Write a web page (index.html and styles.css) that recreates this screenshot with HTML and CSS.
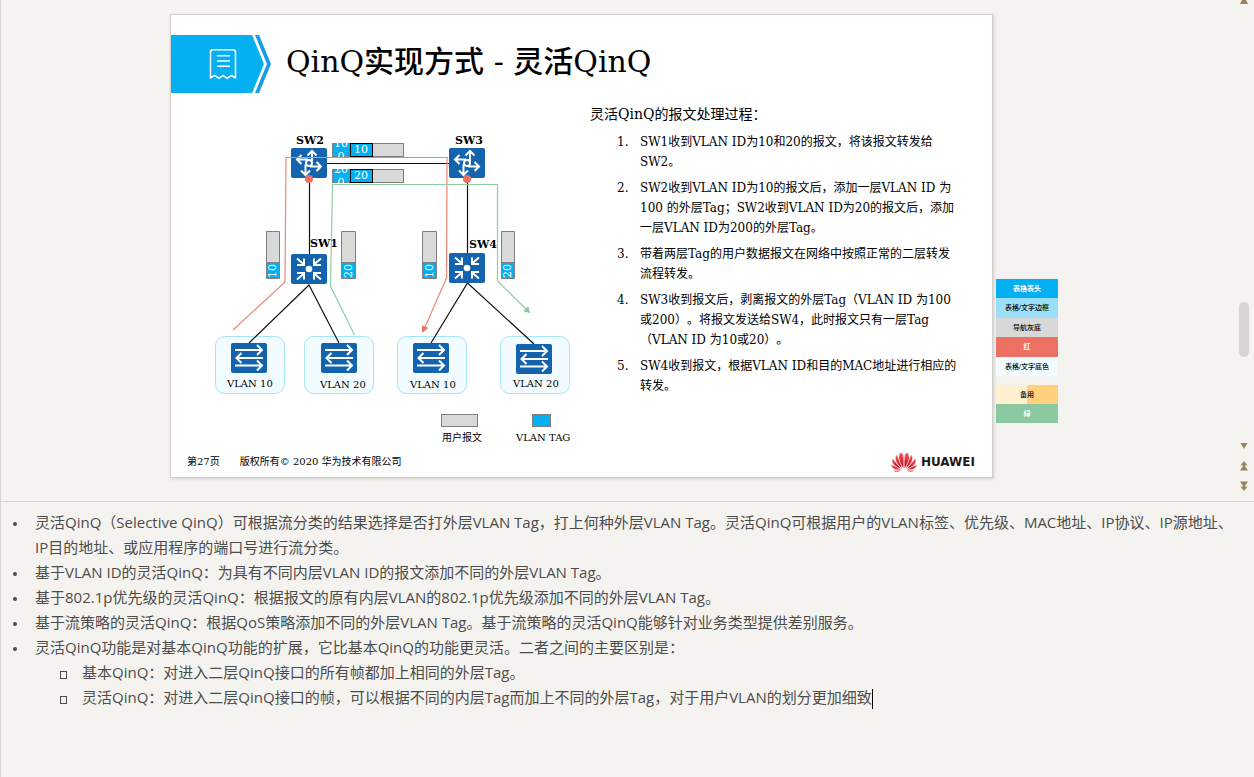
FILE: index.html
```html
<!DOCTYPE html>
<html lang="zh-CN">
<head>
<meta charset="utf-8">
<title>QinQ实现方式 - 灵活QinQ</title>
<link rel="stylesheet" href="styles.css">
</head>
<body>
<div class="editor">
  <main class="stage">
    <article class="slide">
      <header class="slide-header">
        <svg class="badge" width="101" height="58" viewBox="0 0 101 58" aria-hidden="true">
          <path d="M0 0H81L93 29L81 58H0Z" fill="#04aff2"/>
          <path d="M84 0H88L100 29L88 58H84L96 29Z" fill="#189ce8"/>
          <path d="M42 14.700h20q2.500 0 2.500 2.500V43l-4.200-2.600-4.200 3-4.100-3-4.100 3-4.200-3-4.200 2.600V17.200q0-2.500 2.500-2.500Z" fill="none" stroke="#fff" stroke-width="1.500" stroke-linejoin="round"/>
          <path d="M46 20.700h13M46 26h13M46 31.300h13" stroke="#fff" stroke-width="1.600"/>
        </svg>
        <h1>QinQ实现方式 - 灵活QinQ</h1>
      </header>
      <div class="slide-body">
        <svg class="diagram" width="380" height="325" viewBox="205 125 380 325" role="img" aria-label="灵活QinQ组网">
          <defs>
            <g id="router">
              <rect width="36" height="30" rx="2" fill="#1463ae"/>
              <g fill="none" stroke="#fff" stroke-width="2">
                <path d="M21 13V3.500M16.500 7.500L21 3L25.500 7.500"/>
                <path d="M17 11.500H6M10.500 7L6 11.500L10.500 16"/>
                <path d="M14.500 16.500V26.500M10 22.500L14.500 27L19 22.500"/>
                <path d="M19 18.500H30M25.500 14L30 18.500L25.500 23"/>
                <circle cx="18" cy="15" r="3"/>
              </g>
            </g>
            <g id="aggregate">
              <rect width="36" height="30" rx="2" fill="#1463ae"/>
              <circle cx="18" cy="15" r="3.300" fill="#fff"/>
              <path d="M6 4.500L13 10.500M13 4.500V11H6M30 4.500L23 10.500M23 4.500V11H30M6 25.500L13 19.500M13 25.500V19H6M30 25.500L23 19.500M23 25.500V19H30" fill="none" stroke="#fff" stroke-width="2"/>
            </g>
            <g id="switch">
              <rect width="36" height="30" rx="2" fill="#1463ae"/>
              <path d="M4 7H30M26 2L31 7L26 12M32 15H6M10.500 10L5.500 15L10.500 20M4 22.500H30M26 17.500L31 22.500L26 27.500" fill="none" stroke="#fff" stroke-width="2"/>
            </g>
            <clipPath id="clip-a"><rect x="333" y="143" width="17" height="14"/></clipPath>
            <clipPath id="clip-b"><rect x="333" y="169" width="17" height="14"/></clipPath>
          </defs>
          <g class="zone">
            <rect x="215.500" y="336.500" width="69" height="57" rx="9"/>
            <rect x="304.500" y="336.500" width="69" height="57" rx="9"/>
            <rect x="397.500" y="336.500" width="69" height="57" rx="9"/>
            <rect x="500.500" y="336.500" width="69" height="57" rx="9"/>
          </g>
          <path class="link" d="M309.500 163V268M467.500 163V268M309 163.500H467M249 343L309 285L339 343M431 343L467.500 283L534 344"/>
          <use href="#router" x="291" y="148"/>
          <use href="#router" x="449" y="148"/>
          <use href="#aggregate" x="291" y="254"/>
          <use href="#aggregate" x="449" y="253"/>
          <use href="#switch" x="231" y="343"/>
          <use href="#switch" x="321" y="343"/>
          <use href="#switch" x="413" y="343"/>
          <use href="#switch" x="516" y="344"/>

          <g stroke="#7f7f7f">
            <rect x="332.500" y="143.500" width="18" height="13" fill="#04aff2"/>
            <rect x="372.500" y="143.500" width="31" height="13" fill="#d9d9d9"/>
            <rect x="350.500" y="143.500" width="22" height="13" fill="#04aff2" stroke="#000"/>
            <rect x="332.500" y="169.500" width="18" height="13" fill="#04aff2"/>
            <rect x="372.500" y="169.500" width="31" height="13" fill="#d9d9d9"/>
            <rect x="350.500" y="169.500" width="22" height="13" fill="#04aff2" stroke="#000"/>
          </g>
          <g class="tag">
            <g clip-path="url(#clip-a)"><text x="341" y="147">10</text><text x="341" y="160">0</text></g>
            <g clip-path="url(#clip-b)"><text x="341" y="173">20</text><text x="341" y="186">0</text></g>
            <text x="361" y="153">10</text>
            <text x="361" y="179">20</text>
          </g>

          <g stroke="#7f7f7f">
            <path d="M266.500 231.500h13v31h-13ZM341.500 231.500h14v31h-14ZM422.500 231.500h14v31h-14ZM501.500 231.500h13v31h-13Z" fill="#d9d9d9"/>
            <path d="M266.500 262.500h13v16h-13ZM341.500 262.500h14v16h-14ZM422.500 262.500h14v16h-14ZM501.500 262.500h13v16h-13Z" fill="#04aff2"/>
          </g>
          <g class="tag">
            <text transform="translate(276 271) rotate(-90)">10</text>
            <text transform="translate(352 271) rotate(-90)">20</text>
            <text transform="translate(433 271) rotate(-90)">10</text>
            <text transform="translate(511 271) rotate(-90)">20</text>
          </g>

          <path class="flow-red" d="M233 330L285 282L286 157.500H447L446.500 278L425 327"/>
          <path class="head-red" d="M422.500 332L422.500 326L427.500 328Z"/>
          <path class="flow-green" d="M354.500 335L330.500 286L332.500 184.500H497.500V281L526 309"/>
          <path class="head-green" d="M529.500 312.500L524 311L528 307Z"/>
          <circle cx="309" cy="179" r="4" fill="#ed7062"/>
          <circle cx="467" cy="179" r="4" fill="#ed7062"/>

          <g class="device">
            <text x="296" y="144">SW2</text>
            <text x="455" y="144">SW3</text>
            <text x="310" y="247">SW1</text>
            <text x="469" y="248">SW4</text>
          </g>
          <g class="label">
            <text x="227" y="387">VLAN 10</text>
            <text x="320" y="388">VLAN 20</text>
            <text x="410" y="388">VLAN 10</text>
            <text x="513" y="387">VLAN 20</text>
            <text x="442" y="441">用户报文</text>
            <text x="516" y="441">VLAN TAG</text>
          </g>
          <g stroke="#7f7f7f">
            <rect x="441.500" y="414.500" width="36" height="12" fill="#d9d9d9"/>
            <rect x="532.500" y="414.500" width="18" height="12" fill="#04aff2"/>
          </g>
        </svg>
        <section class="steps">
          <h2>灵活QinQ的报文处理过程：</h2>
          <ol>
            <li>SW1收到VLAN ID为10和20的报文，将该报文转发给<br>SW2。</li>
            <li>SW2收到VLAN ID为10的报文后，添加一层VLAN ID 为<br>100 的外层Tag；SW2收到VLAN ID为20的报文后，添加<br>一层VLAN ID为200的外层Tag。</li>
            <li>带着两层Tag的用户数据报文在网络中按照正常的二层转发<br>流程转发。</li>
            <li>SW3收到报文后，剥离报文的外层Tag（VLAN ID 为100<br>或200）。将报文发送给SW4，此时报文只有一层Tag<br>（VLAN ID 为10或20）。</li>
            <li>SW4收到报文，根据VLAN ID和目的MAC地址进行相应的<br>转发。</li>
          </ol>
        </section>
      </div>
      <footer class="slide-footer">
        <span>第27页</span>
        <span>版权所有© 2020 华为技术有限公司</span>
        <span class="brand">
          <svg width="26" height="20" viewBox="-13 -18 26 20" aria-hidden="true">
            <defs>
              <linearGradient id="petal-fill" x1="0" y1="0" x2="0" y2="1"><stop offset="0" stop-color="#f2575a"/><stop offset="1" stop-color="#c8051c"/></linearGradient>
            </defs>
            <g fill="url(#petal-fill)" stroke="#fff" stroke-width=".4">
              <path d="M-.4-1.500C-6-8-6.500-16-3-17.300C.2-17.600 0-8-.4-1.500Z"/>
              <path d="M.4-1.500C6-8 6.500-16 3-17.300C-.2-17.600 0-8 .4-1.500Z"/>
              <path d="M-1.200-1.400C-8-5-10-12-7.500-15.200C-5.500-13-4.600-7-1.200-1.400Z"/>
              <path d="M1.200-1.400C8-5 10-12 7.500-15.200C5.500-13 4.600-7 1.200-1.400Z"/>
              <path d="M-1.800-.9C-10-3-13-7.500-11.500-11.600C-9-9.500-7-5-1.800-.9Z"/>
              <path d="M1.800-.9C10-3 13-7.500 11.500-11.600C9-9.500 7-5 1.800-.9Z"/>
              <path d="M-2.200-.3C-8.500.5-12.500-1.500-13-5.600C-9-4-6-2-2.200-.3ZM-2.400.3C-5 2-8.500 2.400-10.300.6Z"/>
              <path d="M2.200-.3C8.500.5 12.500-1.500 13-5.600C9-4 6-2 2.200-.3ZM2.400.3C5 2 8.500 2.400 10.300.6Z"/>
            </g>
          </svg>
          <b>HUAWEI</b>
        </span>
      </footer>
    </article>
    <aside class="palette">
      <span class="swatch head">表格表头</span>
      <span class="swatch edge">表格/文字边框</span>
      <span class="swatch gray">导航灰底</span>
      <span class="swatch red">红</span>
      <span class="swatch base">表格/文字底色</span>
      <span class="swatch spare">备用</span>
      <span class="swatch green">绿</span>
    </aside>
    <nav class="scroll">
      <button type="button" aria-label="向上滚动"><svg width="8" height="4" viewBox="0 0 8 4"><path d="M2 0H6L8 4H0Z"/></svg></button>
      <div class="track"><div class="thumb"></div></div>
      <button type="button" aria-label="向下滚动"><svg width="8" height="6" viewBox="0 0 8 6"><path d="M.5 0H7.500L4 6Z"/></svg></button>
      <button type="button" aria-label="上一张幻灯片"><svg width="8" height="10" viewBox="0 0 8 10"><path d="M4 0L7.500 4.500H.5ZM4 3.500L8 9.500H0Z"/></svg></button>
      <button type="button" aria-label="下一张幻灯片"><svg width="8" height="10" viewBox="0 0 8 10"><path d="M0 .5H8L4 6.500ZM.5 5.500H7.500L4 10Z"/></svg></button>
    </nav>
  </main>
  <section class="notes" aria-label="备注">
    <ul>
      <li>灵活QinQ（Selective QinQ）可根据流分类的结果选择是否打外层VLAN Tag，打上何种外层VLAN Tag。灵活QinQ可根据用户的VLAN标签、优先级、MAC地址、IP协议、IP源地址、<br>IP目的地址、或应用程序的端口号进行流分类。</li>
      <li>基于VLAN ID的灵活QinQ：为具有不同内层VLAN ID的报文添加不同的外层VLAN Tag。</li>
      <li>基于802.1p优先级的灵活QinQ：根据报文的原有内层VLAN的802.1p优先级添加不同的外层VLAN Tag。</li>
      <li>基于流策略的灵活QinQ：根据QoS策略添加不同的外层VLAN Tag。基于流策略的灵活QinQ能够针对业务类型提供差别服务。</li>
      <li>灵活QinQ功能是对基本QinQ功能的扩展，它比基本QinQ的功能更灵活。二者之间的主要区别是：
        <ul>
          <li>基本QinQ：对进入二层QinQ接口的所有帧都加上相同的外层Tag。</li>
          <li>灵活QinQ：对进入二层QinQ接口的帧，可以根据不同的内层Tag而加上不同的外层Tag，对于用户VLAN的划分更加细致<span class="caret"></span></li>
        </ul>
      </li>
    </ul>
  </section>
</div>
</body>
</html>
```
FILE: styles.css
```css
* { box-sizing: border-box; }

body {
  margin: 0;
  background: #f4f3ef;
  color: #000;
  font-family: "DejaVu Serif", "Noto Sans CJK SC", serif;
  text-spacing-trim: space-all;
}

.editor {
  display: flex;
  flex-direction: column;
  min-height: 100vh;
  border-left: 1px solid #d6d5d2;
}

.stage {
  display: flex;
  padding-left: 169px;
  border-bottom: 1px solid #d6d5d2;
}

.slide {
  display: flex;
  flex-direction: column;
  width: 823px;
  margin: 14px 0 23px;
  background: #fff;
  border: 1px solid #d0cfcc;
  box-shadow: 1px 1px 3px #d0cfcc;
}

.slide-header {
  display: flex;
  align-items: center;
  gap: 14px;
  margin-top: 20px;
}

.slide-header h1 {
  margin: 0 0 4px;
  font-size: 30px;
  line-height: 40px;
  font-weight: 500;
}

.slide-body {
  display: flex;
  padding-left: 34px;
}

.diagram {
  flex: none;
  margin-top: 32px;
}

.zone { fill: #f2fbff; stroke: #a5e4fb; }
.link { fill: none; stroke: #111; stroke-width: 1.2; }
.flow-red { fill: none; stroke: #f0857a; stroke-width: 1.2; }
.flow-green { fill: none; stroke: #8fcda3; stroke-width: 1.2; }
.head-red { fill: #ed7062; stroke: #ed7062; }
.head-green { fill: #8ac9a0; stroke: #8ac9a0; }
.tag { fill: #fff; font-size: 11px; text-anchor: middle; }
.device { font-size: 11px; font-weight: 700; }
.label { font-size: 10px; }

.steps {
  flex: 1;
  padding: 11px 0 0 5px;
}

.steps h2 {
  margin: 0 0 8px;
  font-size: 14px;
  line-height: 20px;
  font-weight: 400;
}

.steps ol {
  margin: 0;
  padding: 0;
  list-style: none;
  counter-reset: step;
  font-size: 12px;
  line-height: 20px;
}

.steps ol li {
  display: block;
  position: relative;
  margin-bottom: 6px;
  padding-left: 50px;
  white-space: nowrap;
  counter-increment: step;
}

.steps ol li::before {
  content: counter(step) ".";
  position: absolute;
  left: 27px;
}

.slide-footer {
  display: flex;
  align-items: center;
  gap: 20px;
  height: 27px;
  padding: 0 17px 6px 16px;
  font-size: 10px;
}

.brand {
  display: flex;
  align-items: center;
  gap: 4px;
  margin-left: auto;
  padding-top: 2px;
  color: #231815;
  font: 700 12px/20px "DejaVu Sans", sans-serif;
}

.palette {
  display: flex;
  flex-direction: column;
  width: 62px;
  margin: 279px 0 0 3px;
}

.swatch {
  height: 19px;
  font: 7px/19px "Liberation Sans", "Noto Sans CJK SC", sans-serif;
  font-weight: 500;
  text-align: center;
  white-space: nowrap;
}

.head { background: #04aff2; color: #fff; font-weight: 700; }
.edge { height: 20px; background: #9bdff9; }
.gray { background: #d8d8d8; }
.red { height: 20px; background: #ed7062; color: #fff; font-weight: 700; }
.base { background: #f2fbff; }
.spare { margin-top: 9px; background: linear-gradient(90deg, #fff1cf 50%, #ffd07d 50%); }
.green { background: #8ac9a0; color: #fff; font-weight: 700; }

.scroll {
  display: flex;
  flex-direction: column;
  align-items: center;
  width: 20px;
  margin-left: auto;
  padding-bottom: 5px;
}

.scroll button {
  display: flex;
  align-items: center;
  justify-content: center;
  width: 20px;
  height: 20px;
  padding: 0;
  border: 0;
  background: none;
}

.scroll button:first-child { height: 4px; }
.scroll path { fill: #9a8358; }

.track { flex: 1; padding-top: 298px; }

.thumb {
  width: 10px;
  height: 55px;
  border-radius: 5px;
  background: #d6d5d2;
}

.notes {
  padding-top: 8px;
  color: #4c4c4c;
  font-family: "Open Sans", "Noto Sans CJK SC", sans-serif;
  font-size: 15px;
  font-kerning: none;
  line-height: 25px;
  white-space: nowrap;
  overflow: hidden;
}

.notes ul {
  margin: 0;
  padding: 0;
  list-style: none;
}

.notes li {
  position: relative;
  padding-left: 34px;
}

.notes li::before {
  content: "";
  position: absolute;
  left: 12px;
  top: 12px;
  width: 4px;
  height: 4px;
  border-radius: 2px;
  background: #4c4c4c;
}

.notes li li { padding-left: 47px; }

.notes li li::before {
  left: 25px;
  top: 11px;
  width: 5px;
  height: 6px;
  border: 1px solid #4c4c4c;
  border-radius: 0;
  background: none;
}

.caret {
  display: inline-block;
  width: 1px;
  height: 20px;
  background: #000;
  vertical-align: middle;
}
```
